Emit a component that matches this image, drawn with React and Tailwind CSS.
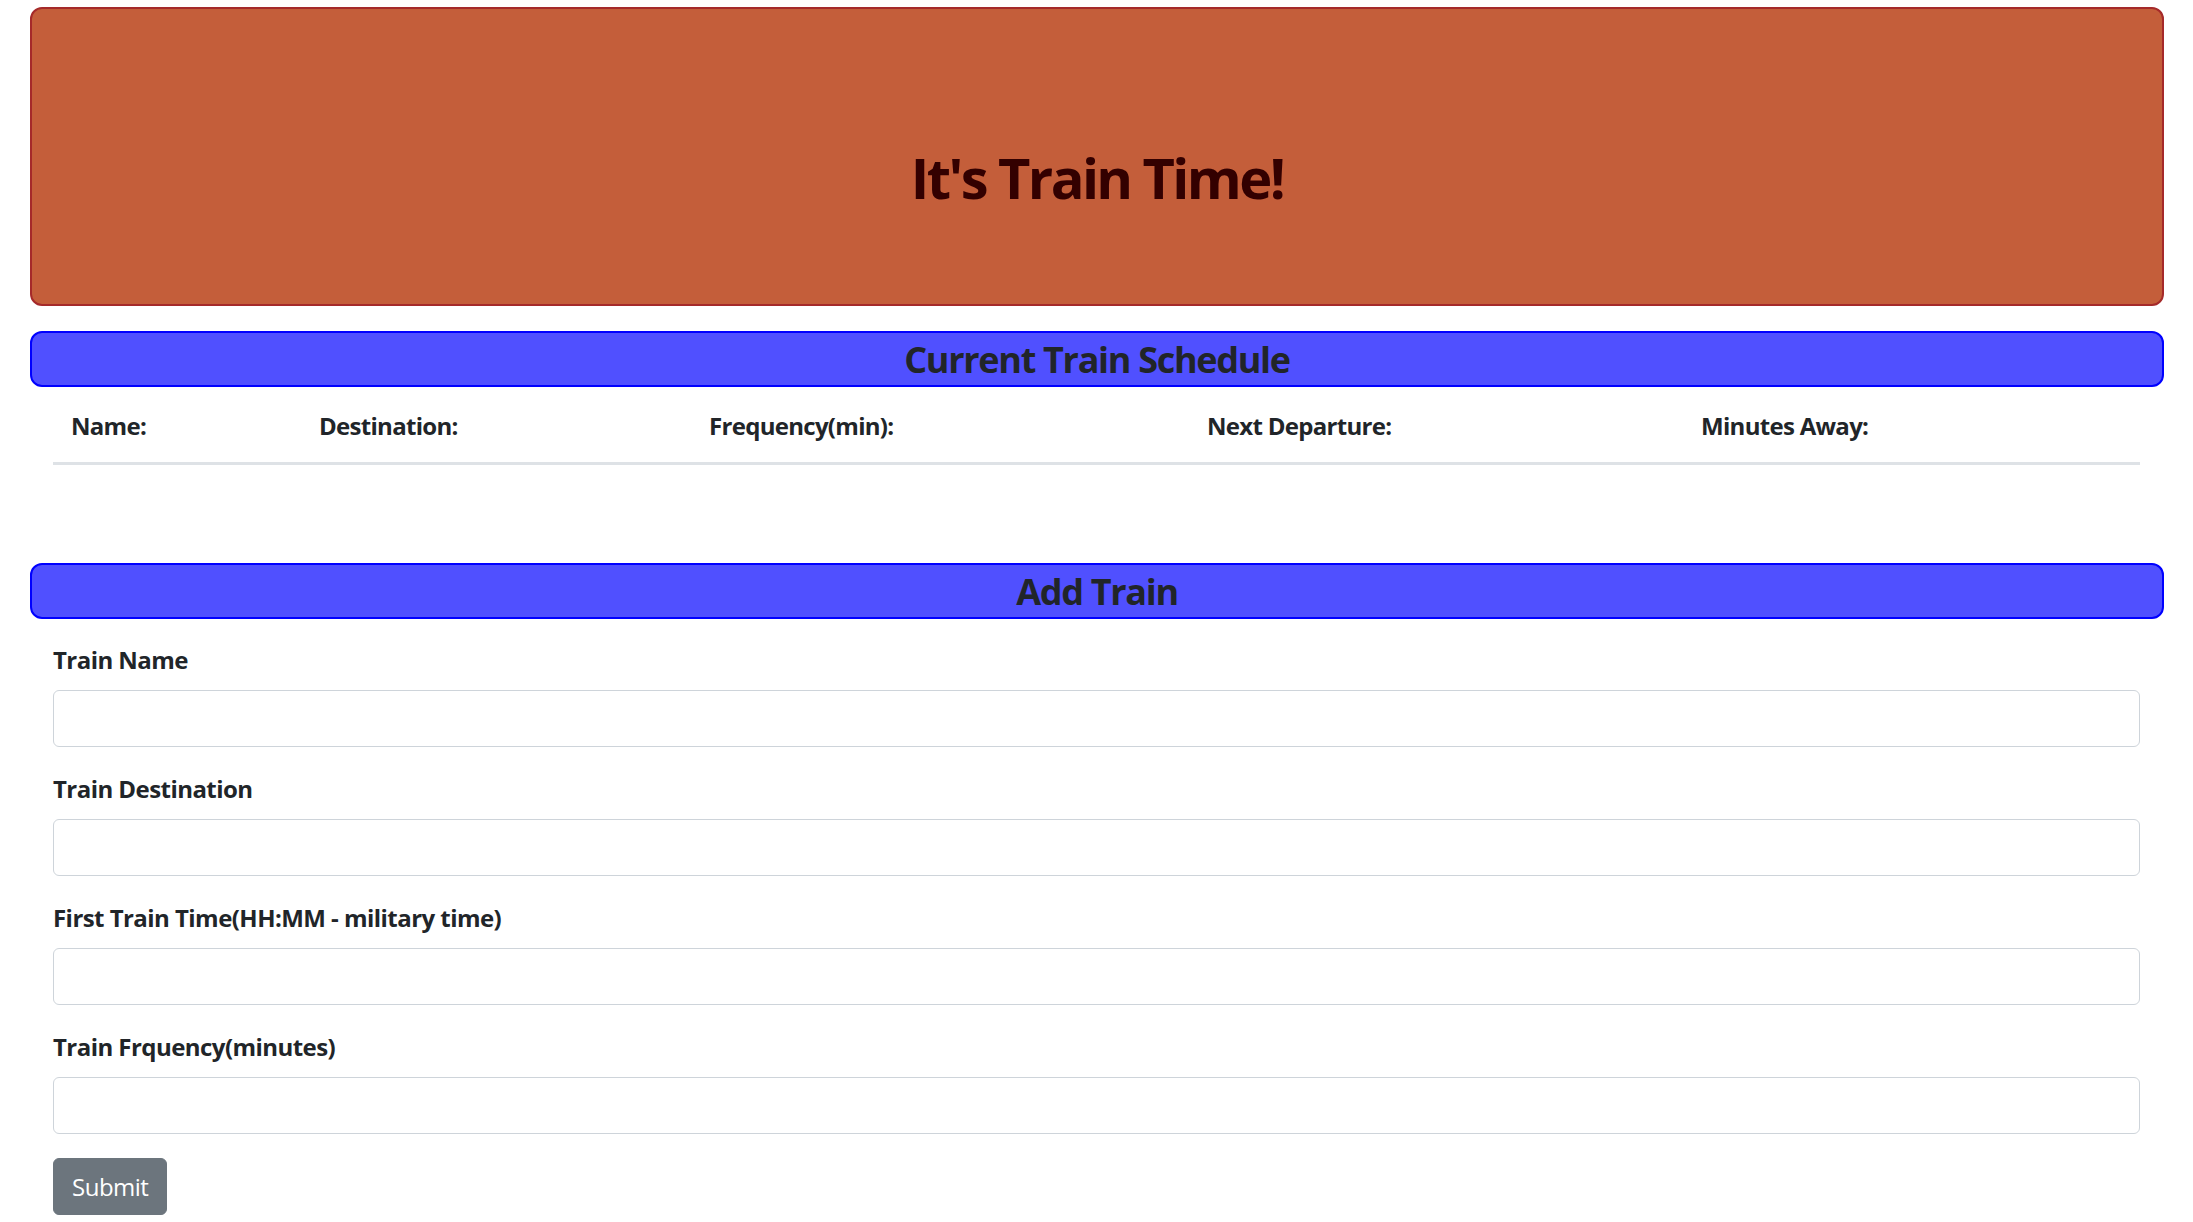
import React from "react";

const font = { fontFamily: '"Open Sans", "Noto Sans", Arial, sans-serif' };

function Field({ label }) {
  return (
    <div className="mb-[24px]">
      <label className="block text-[24px] leading-[36px] font-bold tracking-[-0.55px] text-[#212529] mb-[12px]">{label}</label>
      <input
        type="text"
        className="block w-full h-[57px] rounded-[6px] border-[1.5px] border-[#ced4da] bg-white px-[18px] text-[24px] outline-none"
      />
    </div>
  );
}

export default function App() {
  const cols = ["Name:", "Destination:", "Frequency(min):", "Next Departure:", "Minutes Away:"];
  return (
    <div className="bg-white min-h-[1222px] pl-[30px] pr-[29px] pt-[7px]" style={font}>
      <div className="h-[299px] rounded-[12px] border-2 border-[#a52a2a] bg-[#c45e3a] pt-[135px]">
        <h1 className="text-center text-[56px] leading-[67px] font-bold tracking-[-2.6px] text-[#330000]">It's Train Time!</h1>
      </div>

      <div className="mt-[25px] h-[56px] rounded-[12px] border-2 border-[#0000ff] bg-[#5050ff] flex items-center justify-center">
        <h4 className="text-[36px] leading-[43px] font-bold tracking-[-1.3px] text-[#212529]">Current Train Schedule</h4>
      </div>

      <div className="pl-[23px] pr-[24px]">
        <div className="mt-[3px] grid grid-cols-[248px_390px_498px_494px_1fr] border-b-[3px] border-[#dee2e6]">
          {cols.map((c) => (
            <div key={c} className="p-[18px] text-[24px] leading-[36px] font-bold tracking-[-0.7px] text-[#212529] whitespace-nowrap">
              {c}
            </div>
          ))}
        </div>
      </div>

      <div className="mt-[98px] h-[56px] rounded-[12px] border-2 border-[#0000ff] bg-[#5050ff] flex items-center justify-center">
        <h4 className="text-[36px] leading-[43px] font-bold tracking-[-1.3px] text-[#212529]">Add Train</h4>
      </div>

      <form className="pl-[23px] pr-[24px] pt-[23px]" onSubmit={(e) => e.preventDefault()}>
        <Field label="Train Name" />
        <Field label="Train Destination" />
        <Field label="First Train Time(HH:MM - military time)" />
        <Field label="Train Frquency(minutes)" />
        <button
          type="submit"
          className="h-[57px] px-[18px] rounded-[6px] bg-[#6c757d] border-[1.5px] border-[#6c757d] text-white text-[24px] leading-[36px] tracking-[-0.5px]"
        >
          Submit
        </button>
      </form>
    </div>
  );
}
